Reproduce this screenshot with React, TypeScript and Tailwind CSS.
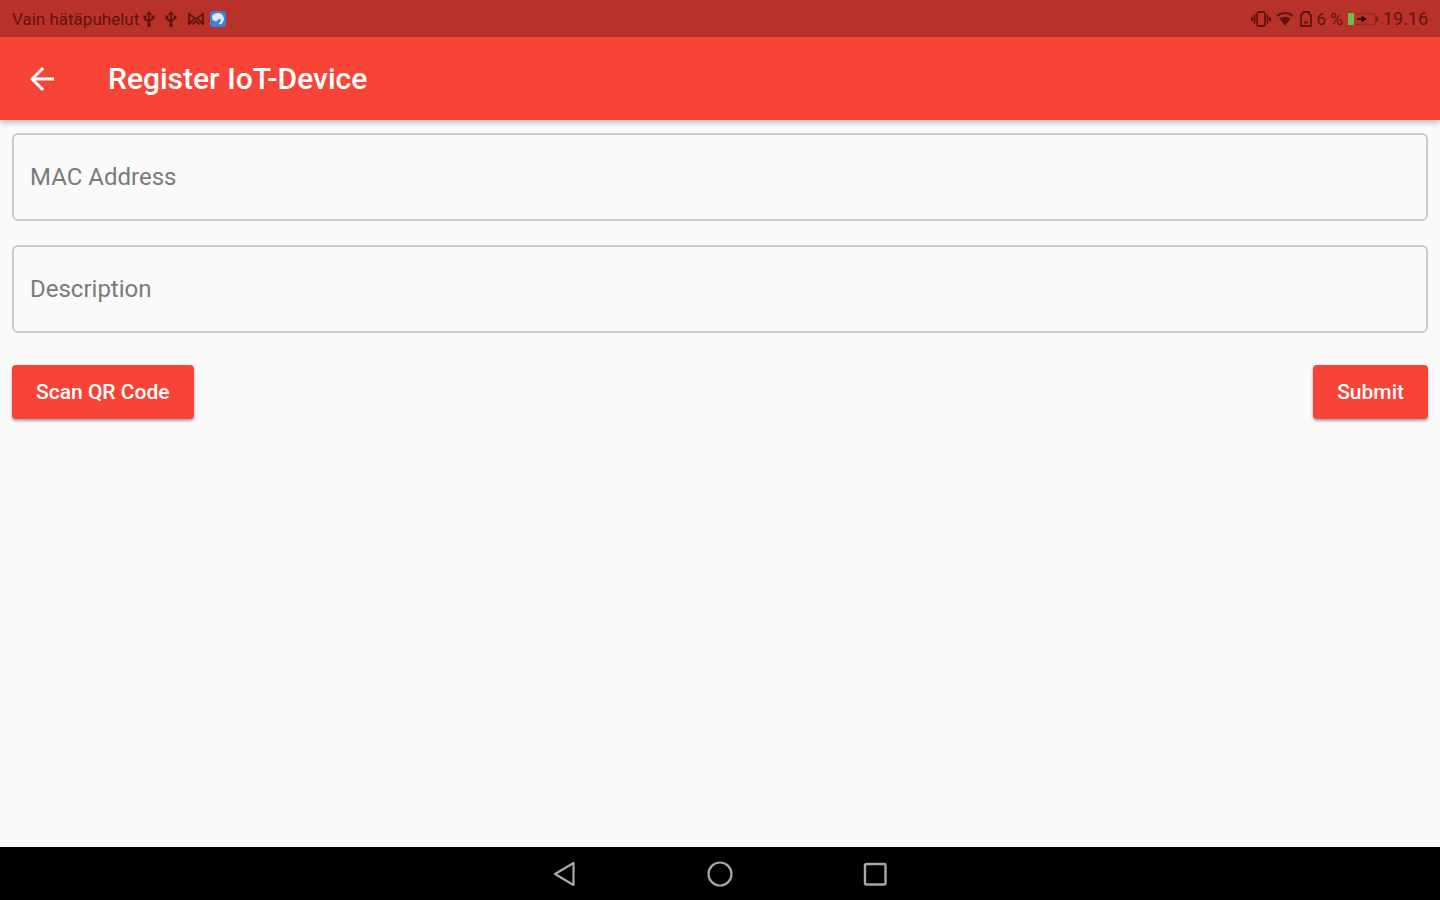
import { useState } from 'react';
import type { FormEvent } from 'react';

const UsbIcon = () => (
    <svg viewBox="0 0 12 18" className="w-3 h-[18px]" fill="none" stroke="currentColor" strokeWidth="1.8" aria-hidden="true">
        <path d="M6 3v12M2 7v2l4 3M10 7v1.500l-4 3" />
        <path d="M3 5 6 1l3 4z" fill="currentColor" stroke="none" />
        <circle cx="6" cy="15" r="2" fill="currentColor" stroke="none" />
        <rect x="0.500" y="5.500" width="3" height="3" fill="currentColor" stroke="none" />
        <rect x="8.500" y="5.500" width="3" height="3" fill="currentColor" stroke="none" />
    </svg>
);

const MailIcon = () => (
    <svg viewBox="0 0 18 14" className="w-[18px] h-3.5" fill="none" stroke="currentColor" strokeWidth="1.8" aria-hidden="true">
        <path d="M2 13V2l7 5 7-5v11M2 12l5-5M16 12l-5-5M5.500 12.500 9 9l3.500 3.500" />
    </svg>
);

const AppBadgeIcon = () => (
    <svg viewBox="0 0 18 18" className="w-[18px] h-[18px]" aria-hidden="true">
        <rect x="1" y="1" width="16" height="16" rx="3" fill="#3f7fd6" />
        <path d="M3 6c2-3.500 8-4 10.500-1 2.500 3 1.500 7.500-2 9.500l-2-1c2.500-1.500 3-3.500 1.500-5L7 11.500 3.500 10z" fill="#dbe9f8" />
    </svg>
);

const VibrateIcon = () => (
    <svg viewBox="0 0 20 18" className="w-5 h-[18px]" fill="none" stroke="currentColor" strokeWidth="1.8" aria-hidden="true">
        <rect x="6" y="2" width="8" height="14" rx="2" />
        <path d="M3.500 4.500v9M16.500 4.500v9M1 7v4M19 7v4" />
    </svg>
);

const WifiIcon = () => (
    <svg viewBox="0 0 18 16" className="w-[18px] h-4" fill="none" stroke="currentColor" strokeWidth="1.8" aria-hidden="true">
        <path d="M1 5c4.500-4 11.500-4 16 0" />
        <path d="M3.500 7.800c3.200-2.600 7.800-2.600 11 0L9 15z" fill="currentColor" stroke="none" />
    </svg>
);

const SimIcon = () => (
    <svg viewBox="0 0 14 18" className="w-3.5 h-[18px]" fill="none" stroke="currentColor" strokeWidth="1.8" aria-hidden="true">
        <path d="M2 16V5l3-3h5v2l2 1v11zM5 12.500h4" />
    </svg>
);

const BatteryIcon = () => (
    <svg viewBox="0 0 32 14" className="w-8 h-3.5" aria-hidden="true">
        <path d="M8 1.500h18.500a2 2 0 0 1 2 2v7a2 2 0 0 1-2 2H8" fill="none" stroke="#9a2a22" strokeWidth="1.4" />
        <path d="M28.500 4.500H31v5h-2.500z" fill="#7a1f19" />
        <rect x="1" y="1" width="6" height="12" rx="1" fill="#6cc04a" />
        <path d="M10 6.200h4.500V3.500L20 7l-5.500 3.500V7.800H10z" fill="#2a0605" />
    </svg>
);

const StatusBar = () => (
    <div className="h-[37px] shrink-0 px-3 flex items-center justify-between bg-[#b93229] text-[#60140f]">
        <div className="flex items-center gap-1">
            <span className="text-[17px] leading-5">Vain hätäpuhelut</span>
            <div className="flex items-center gap-2.5">
                <UsbIcon />
                <UsbIcon />
                <div className="flex items-center gap-1">
                    <MailIcon />
                    <AppBadgeIcon />
                </div>
            </div>
        </div>
        <div className="flex items-center gap-1">
            <div className="flex items-center gap-[5px]">
                <VibrateIcon />
                <WifiIcon />
                <SimIcon />
            </div>
            <span className="text-[17px] leading-5">6 %</span>
            <BatteryIcon />
            <span className="text-[18px] leading-5">19.16</span>
        </div>
    </div>
);

const AppBar = () => (
    <header className="relative h-[83px] shrink-0 pl-6 flex items-center gap-12 bg-[#f84436] text-white shadow-[0_2px_6px_rgba(40,80,90,0.4)]">
        <button type="button" aria-label="Back" className="w-9 h-9">
            <svg viewBox="0 0 24 24" className="w-9 h-9" fill="currentColor" aria-hidden="true">
                <path d="M20 11H7.830l5.590-5.590L12 4l-8 8 8 8 1.410-1.410L7.830 13H20v-2z" />
            </svg>
        </button>
        <h1 className="text-[30px] leading-9 font-medium">Register IoT-Device</h1>
    </header>
);

interface FieldProps {
    label: string;
    value: string;
    onChange: (value: string) => void;
}

const Field = ({ label, value, onChange }: FieldProps) => (
    <input
        type="text"
        aria-label={label}
        placeholder={label}
        value={value}
        onChange={(e) => onChange(e.target.value)}
        className="w-full h-[88px] px-4 rounded-md border-2 border-[#cbcbcb] bg-transparent text-[24px] leading-8 text-gray-900 placeholder:text-[#7b7b7b] outline-none focus:border-[#f84436]"
    />
);

const buttonClass =
    'h-[54px] px-6 rounded-[4px] bg-[#f84436] text-white text-[21px] leading-6 font-medium shadow-[0_2px_3px_rgba(0,0,0,0.35)]';

const NavBar = () => (
    <nav className="h-[53px] shrink-0 flex items-center justify-center gap-32 bg-black text-[#a8a8a8]">
        <button type="button" aria-label="Back" className="w-7 h-7">
            <svg viewBox="0 0 28 28" className="w-7 h-7" fill="none" stroke="currentColor" strokeWidth="2.2" strokeLinejoin="round" aria-hidden="true">
                <path d="M23.500 3v22L5 14z" />
            </svg>
        </button>
        <button type="button" aria-label="Home" className="w-7 h-7">
            <svg viewBox="0 0 28 28" className="w-7 h-7" fill="none" stroke="currentColor" strokeWidth="2.2" aria-hidden="true">
                <circle cx="14" cy="14" r="11.500" />
            </svg>
        </button>
        <button type="button" aria-label="Recent apps" className="w-7 h-7">
            <svg viewBox="0 0 28 28" className="w-7 h-7" fill="none" stroke="currentColor" strokeWidth="2.400" aria-hidden="true">
                <rect x="3" y="4" width="20.500" height="20.500" rx="1.500" />
            </svg>
        </button>
    </nav>
);

export default function App() {
    const [mac, setMac] = useState('');
    const [description, setDescription] = useState('');

    const handleSubmit = (e: FormEvent) => {
        e.preventDefault();
    };

    return (
        <div className="min-h-screen flex flex-col bg-[#fafafa] font-[Roboto,sans-serif]">
            <StatusBar />
            <AppBar />
            <main className="flex-1 px-3 py-[13px]">
                <form onSubmit={handleSubmit} className="flex flex-col gap-6">
                    <Field label="MAC Address" value={mac} onChange={setMac} />
                    <Field label="Description" value={description} onChange={setDescription} />

                    {/* Actions */}
                    <div className="pt-2 flex items-center justify-between">
                        <button type="button" className={buttonClass}>
                            Scan QR Code
                        </button>
                        <button type="submit" className={buttonClass}>
                            Submit
                        </button>
                    </div>
                </form>
            </main>
            <NavBar />
        </div>
    );
}
